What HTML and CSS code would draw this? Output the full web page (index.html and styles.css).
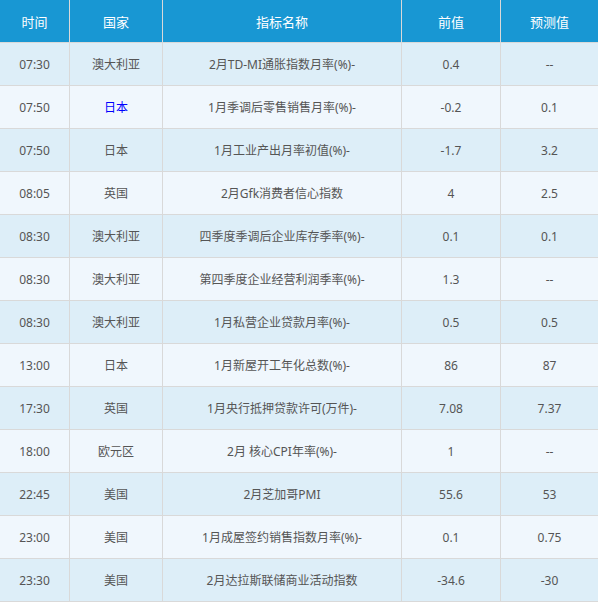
FILE: index.html
```html
<!DOCTYPE html>
<html lang="zh-CN">
<head>
<meta charset="utf-8">
<title>财经日历</title>
<link rel="stylesheet" href="styles.css">
</head>
<body>
<div class="cal">
  <div class="hd">时间</div><div class="hd">国家</div><div class="hd">指标名称</div><div class="hd">前值</div><div class="hd">预测值</div>

  <div class="c a">07:30</div><div class="c a">澳大利亚</div><div class="c a">2月TD-MI通胀指数月率(%)-</div><div class="c a">0.4</div><div class="c a">--</div>
  <div class="c b">07:50</div><div class="c b"><span class="link">日本</span></div><div class="c b">1月季调后零售销售月率(%)-</div><div class="c b">-0.2</div><div class="c b">0.1</div>
  <div class="c a">07:50</div><div class="c a">日本</div><div class="c a">1月工业产出月率初值(%)-</div><div class="c a">-1.7</div><div class="c a">3.2</div>
  <div class="c b">08:05</div><div class="c b">英国</div><div class="c b">2月Gfk消费者信心指数</div><div class="c b">4</div><div class="c b">2.5</div>
  <div class="c a">08:30</div><div class="c a">澳大利亚</div><div class="c a">四季度季调后企业库存季率(%)-</div><div class="c a">0.1</div><div class="c a">0.1</div>
  <div class="c b">08:30</div><div class="c b">澳大利亚</div><div class="c b">第四季度企业经营利润季率(%)-</div><div class="c b">1.3</div><div class="c b">--</div>
  <div class="c a">08:30</div><div class="c a">澳大利亚</div><div class="c a">1月私营企业贷款月率(%)-</div><div class="c a">0.5</div><div class="c a">0.5</div>
  <div class="c b">13:00</div><div class="c b">日本</div><div class="c b">1月新屋开工年化总数(%)-</div><div class="c b">86</div><div class="c b">87</div>
  <div class="c a">17:30</div><div class="c a">英国</div><div class="c a">1月央行抵押贷款许可(万件)-</div><div class="c a">7.08</div><div class="c a">7.37</div>
  <div class="c b">18:00</div><div class="c b">欧元区</div><div class="c b">2月 核心CPI年率(%)-</div><div class="c b">1</div><div class="c b">--</div>
  <div class="c a">22:45</div><div class="c a">美国</div><div class="c a">2月芝加哥PMI</div><div class="c a">55.6</div><div class="c a">53</div>
  <div class="c b">23:00</div><div class="c b">美国</div><div class="c b">1月成屋签约销售指数月率(%)-</div><div class="c b">0.1</div><div class="c b">0.75</div>
  <div class="c a">23:30</div><div class="c a">美国</div><div class="c a">2月达拉斯联储商业活动指数</div><div class="c a">-34.6</div><div class="c a">-30</div>
</div>
</body>
</html>
```
FILE: styles.css
```css
html, body {
  margin: 0;
  padding: 0;
  background: #ffffff;
}
.cal {
  display: grid;
  grid-template-columns: 69px 92px 238px 98px 97px;
  grid-auto-rows: 42px;
  gap: 1px;
  width: 598px;
  background: #d9d9d9;
  border-bottom: 1px solid #d9d9d9;
  font-family: "Noto Sans", "Noto Sans CJK SC", sans-serif;
  font-size: 12px;
  color: #555555;
}
.hd {
  display: flex;
  align-items: center;
  justify-content: center;
  background: #1897d3;
  color: #ffffff;
  font-size: 13px;
}
.c {
  display: flex;
  align-items: center;
  justify-content: center;
  white-space: nowrap;
}
.a { background: #ddeef8; }
.b { background: #f0f7fd; }
.link { color: #0000ff; }
```
